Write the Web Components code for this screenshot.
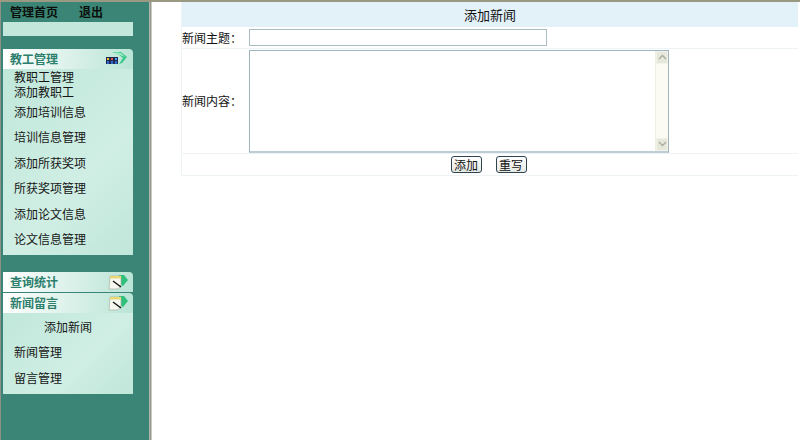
<!DOCTYPE html>
<html lang="zh">
<head>
<meta charset="utf-8">
<title>添加新闻</title>
<style>
  html, body { margin: 0; height: 100%; overflow: hidden; background: #fff; }
  body { font: 12px/16px "Noto Sans CJK SC", "Liberation Sans", sans-serif; color: #111; }
</style>
</head>
<body>
<admin-page>
  <side-bar slot="side">
    <a slot="top" href="#">管理首页</a>
    <a slot="top" href="#">退出</a>

    <menu-panel title="教工管理" icon="people" tight>
      <menu-item>教职工管理</menu-item>
      <menu-item>添加教职工</menu-item>
      <menu-item>添加培训信息</menu-item>
      <menu-item>培训信息管理</menu-item>
      <menu-item>添加所获奖项</menu-item>
      <menu-item>所获奖项管理</menu-item>
      <menu-item>添加论文信息</menu-item>
      <menu-item>论文信息管理</menu-item>
    </menu-panel>

    <menu-panel class="gap" title="查询统计" icon="note"></menu-panel>
    <menu-panel title="新闻留言" icon="note">
      <menu-item center>添加新闻</menu-item>
      <menu-item>新闻管理</menu-item>
      <menu-item>留言管理</menu-item>
    </menu-panel>
  </side-bar>
  <news-form slot="main"></news-form>
</admin-page>

<script>
const icons = {
  people: `
    <svg width="22" height="16" viewBox="0 0 22 16">
      <path d="M6 1 L15 1 L21 6 L16 12 L13 13 L17 7 L12 3 Z" fill="#35c98a"/>
      <path d="M8 1 L15 2 L19 6 L14 4 Z" fill="#a6ecc6"/>
      <rect x="0" y="6" width="12" height="7" fill="#1c2a55"/>
      <rect x="1" y="7" width="2" height="2" fill="#f0c020"/>
      <rect x="5" y="7" width="2" height="2" fill="#e8503a"/>
      <rect x="9" y="7" width="2" height="2" fill="#48a0e8"/>
      <rect x="1" y="10" width="2" height="3" fill="#3468c8"/>
      <rect x="5" y="10" width="2" height="3" fill="#3468c8"/>
      <rect x="9" y="10" width="2" height="3" fill="#3468c8"/>
    </svg>`,
  note: `
    <svg width="20" height="16" viewBox="0 0 20 16">
      <path d="M11 1 L16 1 L20 6 L15 12 L11 10 Z" fill="#2fc07c"/>
      <path d="M2 2 L13 2 L13 11 L10 15 L1 15 Z" fill="#f6f8f0" stroke="#a8b0a0" stroke-width=".7"/>
      <rect x="2" y="2" width="11" height="2.5" fill="#e8d878"/>
      <path d="M5 7 L13 13" stroke="#111" stroke-width="1.4"/>
    </svg>`
}

class AdminPage extends HTMLElement {
  constructor() {
    super()
    this.attachShadow({ mode: 'open' })
    this.shadowRoot.innerHTML = `
      <style>
        :host {
          display: grid;
          grid-template-columns: 149px 3px 1fr;
          height: 440px;
          box-sizing: border-box;
          border-top: 2px solid #9a9a82;
        }
        .rule { background: linear-gradient(90deg, #c9c9c0, #8f9088 45%, #e4e4de); }
      </style>
      <slot name="side"></slot>
      <div class="rule"></div>
      <slot name="main"></slot>
    `
  }
}

class SideBar extends HTMLElement {
  constructor() {
    super()
    this.attachShadow({ mode: 'open' })
    this.shadowRoot.innerHTML = `
      <style>
        :host {
          display: block;
          background: #3a8575;
          border-left: 1px solid #8f9088;
          padding-left: 2px;
        }
        .top {
          display: flex;
          gap: 21px;
          height: 20px;
          padding-left: 7px;
          align-items: center;
        }
        ::slotted(a) {
          color: #0a0f0c;
          font-weight: 700;
          text-decoration: none;
        }
        .strip {
          width: 130px;
          height: 14px;
          margin-bottom: 13px;
          background: #c4e7db;
        }
      </style>
      <div class="top"><slot name="top"></slot></div>
      <div class="strip"></div>
      <slot></slot>
    `
  }
}

class MenuPanel extends HTMLElement {
  constructor() {
    super()
    this.attachShadow({ mode: 'open' })
    this.shadowRoot.innerHTML = `
      <style>
        :host {
          display: block;
          width: 130px;
          margin-bottom: 1px;
        }
        :host(.gap) { margin-top: 17px; }
        header {
          display: flex;
          align-items: center;
          justify-content: space-between;
          height: 20px;
          padding: 0 5px 0 7px;
          border-top-right-radius: 4px;
          background: linear-gradient(90deg, #fff, #d9f0e8 55%, #b9e4d6);
          color: #2d7f6d;
          font-weight: 700;
        }
        svg { display: block; }
        .icon { display: block; height: 16px; }
        .body {
          background: linear-gradient(135deg, #c0e8da, #d0eee4 60%, #c0e6da);
        }
        .body:empty, .body.none { display: none; }
      </style>
      <header><span class="name"></span><span class="icon"></span></header>
      <div class="body"><slot></slot></div>
    `
    this.shadowRoot.querySelector('.name').textContent = this.getAttribute('title')
    this.removeAttribute('title')
    this.shadowRoot.querySelector('.icon').innerHTML = icons[this.getAttribute('icon')]
  }

  connectedCallback() {
    const items = this.querySelectorAll('menu-item')
    const body = this.shadowRoot.querySelector('.body')
    if (!items.length) body.classList.add('none')
    if (this.hasAttribute('tight')) {
      // the first two rows of this panel sit closer together
      items[0].style.height = '15px'
      items[1].style.height = '15px'
      items[0].style.marginTop = '0'
      body.style.paddingTop = '0'
      body.style.paddingBottom = '3px'
    } else if (items.length) {
      body.style.paddingTop = '1px'
      body.style.paddingBottom = '3px'
    }
  }
}

class MenuItem extends HTMLElement {
  constructor() {
    super()
    this.attachShadow({ mode: 'open' })
    this.shadowRoot.innerHTML = `
      <style>
        :host {
          display: flex;
          align-items: center;
          height: 25.5px;
          padding-left: 11px;
          color: #161616;
        }
        :host([center]) { justify-content: center; padding-left: 0; }
      </style>
      <slot></slot>
    `
  }
}

class NewsForm extends HTMLElement {
  constructor() {
    super()
    this.attachShadow({ mode: 'open' })
    this.shadowRoot.innerHTML = `
      <style>
        :host {
          display: block;
          padding: 0 2px 0 29px;
        }
        .card {
          border-left: 1px solid #eef3f5;
          border-bottom: 1px solid #eef3f5;
        }
        h1 {
          margin: 0;
          height: 25px;
          font: inherit;
          font-size: 13px;
          line-height: 25px;
          text-align: center;
          background: #e3f1f9;
        }
        .row {
          display: grid;
          grid-template-columns: 67px 1fr;
          align-items: center;
          border-bottom: 1px solid #eef3f5;
        }
        .subject { height: 21px; }
        .content { height: 104px; }
        input {
          display: block;
          box-sizing: border-box;
          width: 298px;
          height: 17px;
          margin: 0;
          padding: 0 2px;
          border: 1px solid #a9bcc2;
          background: #fff;
        }
        .area {
          display: grid;
          grid-template-columns: 1fr 13px;
          box-sizing: border-box;
          width: 420px;
          height: 103px;
          border: 1px solid #9db4be;
          border-bottom-width: 2px;
          border-bottom-color: #bccdd6;
          background: #fff;
        }
        textarea {
          border: 0;
          padding: 2px;
          margin: 0;
          resize: none;
          overflow: hidden;
          outline: none;
        }
        .bar {
          display: flex;
          flex-direction: column;
          justify-content: space-between;
          background: #fbfbf4;
          border-left: 1px solid #eeeee4;
        }
        .bar span {
          display: flex;
          align-items: center;
          justify-content: center;
          height: 13px;
          background: #e6e8dc;
          border: 1px solid #f2f2ea;
          box-sizing: border-box;
        }
        .bar svg { display: block; }
        .actions {
          display: flex;
          justify-content: center;
          align-items: center;
          gap: 14px;
          height: 21px;
          padding-right: 3px;
        }
        button {
          box-sizing: border-box;
          width: 31px;
          height: 17px;
          padding: 0;
          font: inherit;
          line-height: 14px;
          color: #111;
          background: linear-gradient(#fff, #e6e8e2);
          border: 1px solid #2e4450;
          border-radius: 3px;
        }
      </style>
      <div class="card">
        <h1>添加新闻</h1>
        <div class="row subject">
          <label>新闻主题：</label>
          <input type="text">
        </div>
        <div class="row content">
          <label>新闻内容：</label>
          <div class="area">
            <textarea></textarea>
            <div class="bar">
              <span><svg width="9" height="6" viewBox="0 0 9 6"><path d="M1 5 L4.5 1.5 L8 5" fill="none" stroke="#a9ad9c" stroke-width="1.4"/></svg></span>
              <span><svg width="9" height="6" viewBox="0 0 9 6"><path d="M1 1 L4.5 4.5 L8 1" fill="none" stroke="#a9ad9c" stroke-width="1.4"/></svg></span>
            </div>
          </div>
        </div>
        <div class="actions">
          <button type="button">添加</button>
          <button type="reset">重写</button>
        </div>
      </div>
    `
  }
}

customElements.define('admin-page', AdminPage)
customElements.define('side-bar', SideBar)
customElements.define('menu-panel', MenuPanel)
customElements.define('menu-item', MenuItem)
customElements.define('news-form', NewsForm)
</script>
</body>
</html>
